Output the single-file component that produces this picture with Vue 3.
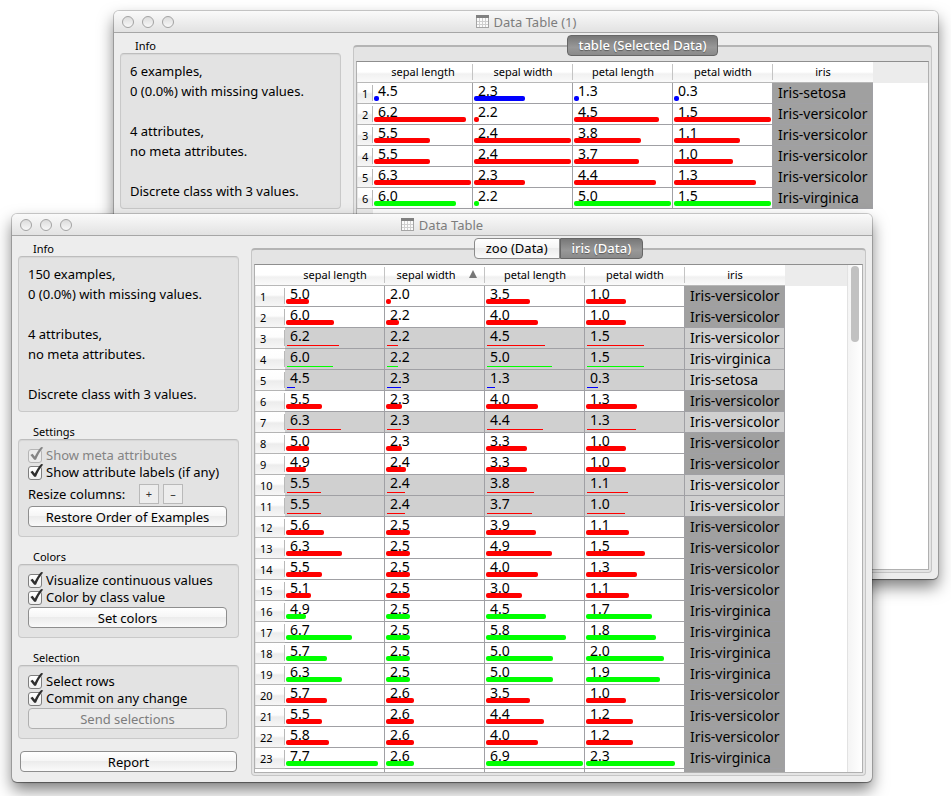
<script setup>
import { reactive } from 'vue'

const columns = ['sepal length', 'sepal width', 'petal length', 'petal width']
const lights = ['Close', 'Minimize', 'Zoom']
const SET = 'Iris-setosa'
const VER = 'Iris-versicolor'
const VIR = 'Iris-virginica'
const classColors = {
  [SET]: '#0000ff',
  [VER]: '#ff0000',
  [VIR]: '#00ff00'
}

const toRow = ([values, label, selected]) => ({
  values: values.split(' '),
  label,
  selected: Boolean(selected)
})

const windows = reactive([
  {
    id: 'back',
    title: 'Data Table (1)',
    info: ['6 examples,', '0 (0.0%) with missing values.', '', '4 attributes,', 'no meta attributes.', '', 'Discrete class with 3 values.'],
    tabs: ['table (Selected Data)'],
    active: 0,
    ranges: [[4.5, 6.3], [2.2, 2.4], [1.3, 5.0], [0.3, 1.5]],
    rows: [
      ['4.5 2.3 1.3 0.3', SET],
      ['6.2 2.2 4.5 1.5', VER],
      ['5.5 2.4 3.8 1.1', VER],
      ['5.5 2.4 3.7 1.0', VER],
      ['6.3 2.3 4.4 1.3', VER],
      ['6.0 2.2 5.0 1.5', VIR]
    ].map(toRow)
  },
  {
    id: 'front',
    title: 'Data Table',
    info: ['150 examples,', '0 (0.0%) with missing values.', '', '4 attributes,', 'no meta attributes.', '', 'Discrete class with 3 values.'],
    tabs: ['zoo (Data)', 'iris (Data)'],
    active: 1,
    sorted: 1,
    ranges: [[4.3, 7.9], [2.0, 4.4], [1.0, 6.9], [0.1, 2.5]],
    rows: [
      ['5.0 2.0 3.5 1.0', VER],
      ['6.0 2.2 4.0 1.0', VER],
      ['6.2 2.2 4.5 1.5', VER, true],
      ['6.0 2.2 5.0 1.5', VIR, true],
      ['4.5 2.3 1.3 0.3', SET, true],
      ['5.5 2.3 4.0 1.3', VER],
      ['6.3 2.3 4.4 1.3', VER, true],
      ['5.0 2.3 3.3 1.0', VER],
      ['4.9 2.4 3.3 1.0', VER],
      ['5.5 2.4 3.8 1.1', VER, true],
      ['5.5 2.4 3.7 1.0', VER, true],
      ['5.6 2.5 3.9 1.1', VER],
      ['6.3 2.5 4.9 1.5', VER],
      ['5.5 2.5 4.0 1.3', VER],
      ['5.1 2.5 3.0 1.1', VER],
      ['4.9 2.5 4.5 1.7', VIR],
      ['6.7 2.5 5.8 1.8', VIR],
      ['5.7 2.5 5.0 2.0', VIR],
      ['6.3 2.5 5.0 1.9', VIR],
      ['5.7 2.6 3.5 1.0', VER],
      ['5.5 2.6 4.4 1.2', VER],
      ['5.8 2.6 4.0 1.2', VER],
      ['7.7 2.6 6.9 2.3', VIR]
    ].map(toRow)
  }
])

const groups = reactive([
  {
    title: 'Settings',
    checks: [
      { id: 'meta', label: 'Show meta attributes', on: true, disabled: true },
      { id: 'labels', label: 'Show attribute labels (if any)', on: true }
    ],
    resize: true,
    button: 'Restore Order of Examples'
  },
  {
    title: 'Colors',
    checks: [
      { id: 'visualize', label: 'Visualize continuous values', on: true },
      { id: 'byclass', label: 'Color by class value', on: true }
    ],
    button: 'Set colors'
  },
  {
    title: 'Selection',
    checks: [
      { id: 'rows', label: 'Select rows', on: true },
      { id: 'commit', label: 'Commit on any change', on: true }
    ],
    button: 'Send selections',
    buttonDisabled: true
  }
])

function barStyle(win, row, i) {
  const [low, high] = win.ranges[i]
  const share = (Number(row.values[i]) - low) / (high - low)
  const cap = row.selected ? 3 : 5
  return {
    width: Math.round(share * 92) + cap + 'px',
    background: classColors[row.label]
  }
}
</script>

<template>
  <main class="desktop">
    <section v-for="win in windows" :key="win.id" class="window" :class="win.id">
      <header class="titlebar">
        <div class="lights">
          <button v-for="name in lights" :key="name" type="button" class="light" :aria-label="name"></button>
        </div>
        <h1 class="title">
          <svg width="13" height="13" viewBox="0 0 13 13" aria-hidden="true">
            <rect x="0.5" y="0.5" width="12" height="12" fill="#fbfbfb" stroke="#a5a5a5" />
            <path d="M0 0h13v3H0z" fill="#808080" />
            <path d="M1 6.5h11M1 9.5h11M3.5 3v9M6.5 3v9M9.5 3v9" stroke="#cfcfcf" fill="none" />
          </svg>
          <span>{{ win.title }}</span>
        </h1>
      </header>

      <div class="body">
        <aside class="side">
          <section class="group">
            <h2 class="group-title">Info</h2>
            <div class="box info">
              <p v-for="(line, n) in win.info" :key="n" class="info-line">{{ line }}</p>
            </div>
          </section>

          <template v-if="win.id === 'front'">
            <section v-for="group in groups" :key="group.title" class="group">
              <h2 class="group-title">{{ group.title }}</h2>
              <div class="box controls">
                <label v-for="check in group.checks" :key="check.id" class="check" :class="{ disabled: check.disabled }">
                  <span class="tick">
                    <input v-model="check.on" type="checkbox" :disabled="check.disabled" />
                    <svg v-if="check.on" width="16" height="16" viewBox="0 0 16 16" aria-hidden="true">
                      <path d="M2.400 8 4.600 6.800 6.800 9.600C8.400 6 10.600 2.600 13.200 0L15.200 0.400C12 4.400 9.600 8.400 8 12.800H6.200Z" fill="currentColor" />
                    </svg>
                  </span>
                  <span>{{ check.label }}</span>
                </label>
                <div v-if="group.resize" class="resize">
                  <span>Resize columns:</span>
                  <button type="button" class="step" aria-label="Widen columns">+</button>
                  <button type="button" class="step" aria-label="Narrow columns">–</button>
                </div>
                <button type="button" class="push" :disabled="group.buttonDisabled">{{ group.button }}</button>
              </div>
            </section>
            <button type="button" class="push report">Report</button>
          </template>
        </aside>

        <div class="content">
          <nav class="tabs">
            <button
              v-for="(tab, t) in win.tabs"
              :key="tab"
              type="button"
              class="tab"
              :class="{ active: win.active === t }"
              @click="win.active = t"
            >{{ tab }}</button>
          </nav>
          <div class="frame">
            <div class="view">
              <div class="sheet">
                <table>
                  <colgroup>
                    <col class="col-index" />
                    <col v-for="c in 5" :key="c" class="col-value" />
                    <col />
                  </colgroup>
                  <thead>
                    <tr>
                      <td class="corner"></td>
                      <th v-for="(name, c) in columns" :key="name" scope="col" :class="{ sorted: win.sorted === c }">
                        <span>{{ name }}</span>
                        <svg v-if="win.sorted === c" class="arrow" width="8" height="8" viewBox="0 0 8 8" aria-hidden="true">
                          <path d="M4 0 8 8H0Z" fill="#777" />
                        </svg>
                      </th>
                      <th scope="col" class="last">iris</th>
                      <td class="rest"></td>
                    </tr>
                  </thead>
                  <tbody>
                    <tr v-for="(row, r) in win.rows" :key="r" :class="{ selected: row.selected }">
                      <th scope="row">{{ r + 1 }}</th>
                      <td v-for="(value, c) in row.values" :key="c" class="value">
                        <div class="cell">
                          {{ value }}
                          <i class="bar" :style="barStyle(win, row, c)"></i>
                        </div>
                      </td>
                      <td class="class-cell">{{ row.label }}</td>
                    </tr>
                    <tr v-if="win.id === 'front'" aria-hidden="true">
                      <td></td>
                      <td v-for="c in 4" :key="c" class="value"></td>
                      <td class="class-cell"></td>
                    </tr>
                  </tbody>
                </table>
                <div v-if="win.id === 'back'" class="index-rest"></div>
              </div>
              <div v-if="win.id === 'front'" class="scrollbar"><div class="thumb"></div></div>
            </div>
          </div>
        </div>
      </div>
    </section>
  </main>
</template>

<style>
body {
  margin: 0;
  background: #fff;
}
</style>

<style scoped>
* {
  box-sizing: border-box;
}

.desktop {
  position: relative;
  min-height: 100vh;
  overflow: hidden;
  font-family: "Noto Sans", "Open Sans", sans-serif;
  font-size: 13px;
  color: #000;
}

button {
  font: inherit;
  color: inherit;
  padding: 0;
  margin: 0;
}

h1,
h2,
p {
  margin: 0;
  font-weight: 400;
}

.window {
  position: absolute;
  display: flex;
  flex-direction: column;
  background: #ededed;
  border-radius: 5px;
  box-shadow: 0 0 0 1px rgba(0, 0, 0, 0.18), 0 1px 1px rgba(0, 0, 0, 0.3), 0 8px 16px rgba(0, 0, 0, 0.5);
}

.back {
  inset: 11px 13px 217px 114px;
}

.front {
  inset: 214px 79px 14px 12px;
}

.titlebar {
  position: relative;
  display: flex;
  align-items: center;
  justify-content: center;
  height: 22px;
  flex: none;
  background: linear-gradient(#fafafa, #e2e2e2);
  border-bottom: 1px solid #a6a6a6;
  border-radius: 5px 5px 0 0;
}

.lights {
  position: absolute;
  left: 8px;
  top: 5px;
  display: flex;
  gap: 8px;
}

.light {
  width: 12px;
  height: 12px;
  border: 1px solid #a3a3a3;
  border-radius: 50%;
  background: linear-gradient(#dcdcdc, #f8f8f8);
}

.title {
  display: flex;
  align-items: center;
  gap: 5px;
  font-size: 13px;
  line-height: 20px;
  color: #7d7d7d;
}

.body {
  flex: 1;
  min-height: 0;
  display: flex;
  gap: 12px;
  padding: 0 6px 6px;
}

.side {
  flex: none;
  width: 221px;
  display: flex;
  flex-direction: column;
  gap: 12px;
  padding-top: 5px;
}

.group-title {
  padding-left: 15px;
  font-size: 11px;
  line-height: 15px;
}

.box {
  background: #e3e3e3;
  border: 1px solid #c9c9c9;
  border-top-color: #bdbdbd;
  border-radius: 4px;
  box-shadow: inset 0 1px 1px rgba(0, 0, 0, 0.06);
}

.info {
  padding: 7px 9px;
}

.info-line {
  height: 20px;
  line-height: 20px;
  white-space: nowrap;
}

.controls {
  display: flex;
  flex-direction: column;
  padding: 7px 11px 9px 9px;
}

.check {
  display: flex;
  align-items: center;
  gap: 4px;
  height: 17px;
  line-height: 17px;
  white-space: nowrap;
}

.tick {
  display: grid;
  grid-template: 14px / 14px;
  color: #2e2e2e;
}

.tick input {
  grid-area: 1 / 1;
  appearance: none;
  width: 14px;
  height: 14px;
  margin: 0;
  border: 1px solid #7f7f7f;
  border-radius: 3px;
  background: linear-gradient(#fff, #f0f0f0);
}

.tick svg {
  grid-area: 1 / 1;
  align-self: end;
  pointer-events: none;
}

.disabled {
  color: #848484;
}

.disabled .tick {
  color: #858585;
}

.disabled .tick input {
  border-color: #b5b5b5;
  background: #ececec;
}

.resize {
  display: flex;
  align-items: center;
  height: 25px;
}

.resize span {
  flex: none;
  width: 111px;
}

.step {
  width: 20px;
  height: 20px;
  margin-right: 4px;
  border: 1px solid #b9b9b9;
  background: #ededed;
  font-size: 11px;
  line-height: 18px;
  color: #333;
}

.push {
  height: 21px;
  border: 1px solid #8e8e8e;
  border-radius: 4px;
  background: linear-gradient(#fff, #f5f5f5 50%, #ececec 50%, #fafafa);
  line-height: 18px;
}

.check + .push {
  margin-top: 1px;
}

.push:disabled {
  color: #7d7d7d;
  border-color: #b0b0b0;
  background: #ebebeb;
}

.report {
  margin: 0 2px;
}

.content {
  flex: 1;
  min-width: 0;
  display: flex;
  flex-direction: column;
  padding-top: 2px;
}

.tabs {
  position: relative;
  display: flex;
  justify-content: center;
  height: 21px;
  flex: none;
}

.tab {
  padding: 0 11px 2px;
  border: 1px solid #8b8b8b;
  background: linear-gradient(#fff, #f5f5f5 50%, #ececec 50%, #fafafa);
  line-height: 18px;
}

.tab:first-child {
  border-radius: 4px 0 0 4px;
}

.tab:last-child {
  border-radius: 0 4px 4px 0;
}

.tab:only-child {
  padding: 0 10px 2px;
  border-radius: 4px;
}

.tab.active {
  border-color: #666;
  background: linear-gradient(#787878, #989898 60%, #8a8a8a);
  color: #fff;
  font-weight: 500;
  text-shadow: 0 1px 1px rgba(0, 0, 0, 0.4);
}

.frame {
  flex: 1;
  min-height: 0;
  display: flex;
  margin-top: -11px;
  padding: 14px 2px 2px;
  background: #e4e4e4;
  border: 1px solid #c6c6c6;
  border-top: 2px solid #b4b4b4;
  border-radius: 4px;
}

.view {
  flex: 1;
  min-width: 0;
  display: flex;
  background: #fff;
  border: 1px solid #b0b0b0;
  border-top-color: #8e8e8e;
}

.sheet {
  flex: 1;
  min-width: 0;
  overflow: hidden;
  display: flex;
  flex-direction: column;
}

table {
  flex: none;
  table-layout: fixed;
  width: 100%;
  border-collapse: separate;
  border-spacing: 0;
}

.col-index {
  width: 16px;
}

.front .col-index {
  width: 30px;
}

.col-value {
  width: 100px;
}

th,
td {
  height: 21px;
  padding: 0;
  font-weight: 400;
  white-space: nowrap;
}

thead th,
.corner {
  position: relative;
  font-size: 11px;
  line-height: 18px;
  text-align: center;
  background: linear-gradient(#fff, #fff 50%, #f1f1f1 60%, #fafafa);
  border-bottom: 1px solid #b8b8b8;
}

thead th::after {
  content: "";
  position: absolute;
  right: 0;
  top: 2px;
  height: 16px;
  border-right: 1px solid #c4c4c4;
}

thead th.last::after {
  display: none;
}

thead th.sorted {
  padding-right: 18px;
}

.arrow {
  position: absolute;
  right: 8px;
  top: 5px;
}

.rest {
  background: #ececec;
}

tbody th {
  position: relative;
  padding: 1px 0 0 5px;
  text-align: left;
  font-size: 11px;
  line-height: 19px;
  background: linear-gradient(90deg, #e6e6e6 1px, transparent 1px), linear-gradient(#fff, #fdfdfd 45%, #ececec 55%, #f6f6f6);
  border-bottom: 1px solid #b4b4b4;
}

tbody th::after {
  content: "";
  position: absolute;
  right: 0;
  top: 2px;
  height: 16px;
  border-right: 1px solid #b8b8b8;
}

.value {
  border-right: 1px solid #a0a0a4;
  border-bottom: 1px solid #a0a0a4;
}

.cell {
  position: relative;
  height: 20px;
  padding-left: 5px;
  font-size: 14px;
  line-height: 16px;
}

.bar {
  position: absolute;
  left: 1px;
  top: 13px;
  height: 5px;
  border-radius: 2px;
}

.class-cell {
  padding-left: 5px;
  font-size: 14px;
  line-height: 20px;
  background: #a0a0a0;
  border-right: 1px solid #a0a0a4;
  border-bottom: 1px solid #a0a0a4;
}

.selected > td {
  background: #d0d0d0;
}

.selected .bar {
  left: 2px;
  top: 17px;
  height: 1px;
  border-radius: 0;
}

.index-rest {
  flex: 1;
  width: 16px;
  background: #ececec;
}

.scrollbar {
  flex: none;
  width: 15px;
  padding: 1px 3px;
  border-left: 1px solid #e2e2e2;
  background: linear-gradient(90deg, #f4f4f4, #fff);
}

.thumb {
  width: 8px;
  height: 76px;
  border-radius: 4px;
  background: #c1c1c1;
}
</style>
